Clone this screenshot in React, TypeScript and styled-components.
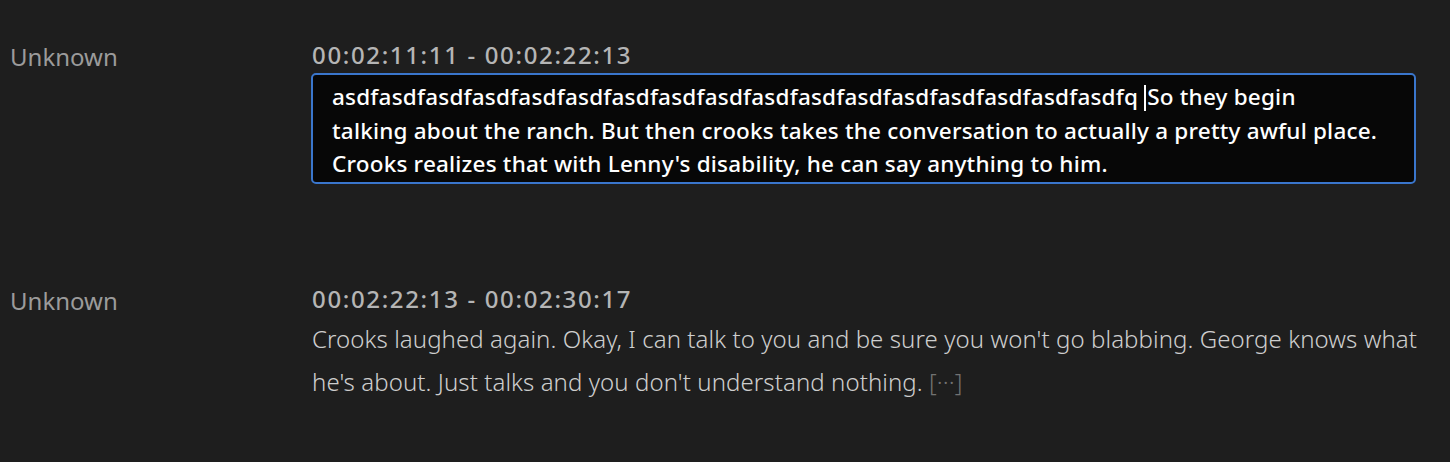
import React from 'react';
import styled, { createGlobalStyle } from 'styled-components';

const GlobalStyle = createGlobalStyle`
  html, body {
    margin: 0;
    padding: 0;
    background: #1e1e1e;
  }
  body {
    font-family: "Noto Sans", "Open Sans", sans-serif;
  }
`;

const Page = styled.div`
  width: 1450px;
  height: 462px;
  background: #1e1e1e;
  padding: 40px 34px 0 10px;
  box-sizing: border-box;
  display: flex;
  flex-direction: column;
  gap: 100px;
`;

const Row = styled.div`
  display: grid;
  grid-template-columns: 301px 1fr;
  align-items: start;
`;

const Speaker = styled.div`
  color: #9b9b9b;
  font-size: 24px;
  font-weight: 400;
  line-height: 30px;
  padding-top: 2px;
`;

const Body = styled.div`
  display: flex;
  flex-direction: column;
  min-width: 0;
`;

const Time = styled.div`
  color: #b5b5b5;
  font-size: 24px;
  font-weight: 500;
  letter-spacing: 1.65px;
  line-height: 30px;
  margin-left: 1px;
  white-space: nowrap;
`;

const Editor = styled.div`
  margin-top: 3px;
  height: 111px;
  box-sizing: border-box;
  background: #070707;
  border: 2px solid #3a76cc;
  border-radius: 5px;
  padding: 5px 20px 2px 19px;
  color: #ffffff;
  font-size: 22.5px;
  font-weight: 500;
  letter-spacing: 0.2px;
  line-height: 33.5px;
  white-space: nowrap;
  overflow: hidden;
`;

const Caret = styled.span`
  display: inline-block;
  width: 2px;
  height: 26px;
  background: #ffffff;
  vertical-align: -6px;
  margin-right: 1px;
`;

const Text = styled.div`
  margin-top: 3px;
  margin-right: -12px;
  color: #cecece;
  font-size: 24px;
  font-weight: 300;
  letter-spacing: 0.08px;
  line-height: 43px;
  margin-left: 1px;
`;

const More = styled.span`
  color: #727272;
`;

const App = () => (
  <>
    <GlobalStyle />
    <Page>
      <Row>
        <Speaker>Unknown</Speaker>
        <Body>
          <Time>00:02:11:11 - 00:02:22:13</Time>
          <Editor>
            asdfasdfasdfasdfasdfasdfasdfasdfasdfasdfasdfasdfasdfasdfasdfasdfasdfq{' '}
            <Caret />
            So they begin
            <br />
            talking about the ranch. But then crooks takes the conversation to actually a pretty awful place.
            <br />
            Crooks realizes that with Lenny's disability, he can say anything to him.
          </Editor>
        </Body>
      </Row>
      <Row>
        <Speaker>Unknown</Speaker>
        <Body>
          <Time>00:02:22:13 - 00:02:30:17</Time>
          <Text>
            Crooks laughed again. Okay, I can talk to you and be sure you won't go blabbing. George knows what
            he's about. Just talks and you don't understand nothing. <More>[···]</More>
          </Text>
        </Body>
      </Row>
    </Page>
  </>
);

export default App;
